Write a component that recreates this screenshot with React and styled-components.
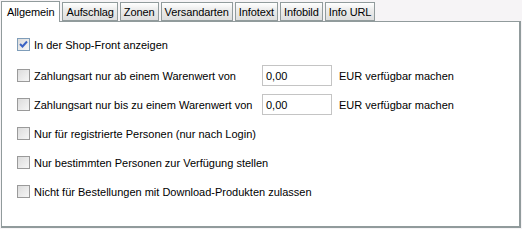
import React from "react";
import styled, { createGlobalStyle } from "styled-components";

const Global = createGlobalStyle`
  html, body { margin: 0; padding: 0; background: #ffffff; }
  body { font-family: Tahoma, "Liberation Sans", Arial, sans-serif; font-size: 11px; color: #000; }
`;

const Frame = styled.div`
  width: 522px;
  height: 229px;
  display: flex;
  flex-direction: column;
  background: #f6f4f6;
`;

const TabBar = styled.div`
  display: flex;
  align-items: flex-end;
  height: 21px;
  padding-left: 1px;
  gap: 2px;
`;

const Tab = styled.div`
  box-sizing: border-box;
  height: ${(p) => (p.$active ? "21px" : "19px")};
  padding: 0 ${(p) => (p.$active ? "5px" : "3px")};
  display: flex;
  align-items: center;
  border: 1px solid #919b9c;
  border-bottom: ${(p) => (p.$active ? "none" : "1px solid #919b9c")};
  background: ${(p) => (p.$active ? "#ffffff" : "linear-gradient(#ffffff, #ececec 40%, #dedede)")};
  margin-bottom: ${(p) => (p.$active ? "-1px" : "0")};
  position: relative;
  z-index: ${(p) => (p.$active ? 1 : 0)};
  white-space: nowrap;
  font-size: 11px;
  letter-spacing: -0.1px;
`;

const Panel = styled.div`
  box-sizing: border-box;
  flex: 1;
  margin: 0 1px 1px 1px;
  background: #ffffff;
  border: 1px solid #919b9c;
  border-right-width: 2px;
  border-bottom-width: 2px;
  padding: 12px 0 0 15px;
  display: flex;
  flex-direction: column;
`;

const Row = styled.label`
  display: flex;
  align-items: center;
  height: 21px;
  margin-bottom: ${(p) => p.$gap}px;
  white-space: nowrap;
`;

const Box = styled.span`
  box-sizing: border-box;
  width: 13px;
  height: 13px;
  border: 1px solid ${(p) => (p.$checked ? "#7f9db9" : "#9a9a9a")};
  background: linear-gradient(135deg, #dcdcdc, #f6f6f6);
  margin-right: 4px;
  display: inline-flex;
  align-items: center;
  justify-content: center;
`;

const Label = styled.span`
  width: ${(p) => (p.$w ? p.$w + "px" : "auto")};
`;

const Input = styled.div`
  box-sizing: border-box;
  width: 70px;
  height: 21px;
  border: 1px solid #c4c4c4;
  background: #fff;
  padding: 2px 3px;
  display: flex;
  align-items: center;
  margin-right: 7px;
`;

const Check = () => (
  <svg width="9" height="9" viewBox="0 0 9 9">
    <path d="M1 4 L3.5 6.5 L8 1.5" fill="none" stroke="#3a62c4" strokeWidth="2" />
  </svg>
);

const tabs = ["Allgemein", "Aufschlag", "Zonen", "Versandarten", "Infotext", "Infobild", "Info URL"];

export default function App() {
  return (
    <>
      <Global />
      <Frame>
        <TabBar>
          {tabs.map((t, i) => (
            <Tab key={t} $active={i === 0}>{t}</Tab>
          ))}
        </TabBar>
        <Panel>
          <Row $gap={10}>
            <Box $checked><Check /></Box>
            <Label>In der Shop-Front anzeigen</Label>
          </Row>
          <Row $gap={8}>
            <Box />
            <Label $w={228}>Zahlungsart nur ab einem Warenwert von</Label>
            <Input>0,00</Input>
            <Label>EUR verfügbar machen</Label>
          </Row>
          <Row $gap={8}>
            <Box />
            <Label $w={228}>Zahlungsart nur bis zu einem Warenwert von</Label>
            <Input>0,00</Input>
            <Label>EUR verfügbar machen</Label>
          </Row>
          <Row $gap={8}>
            <Box />
            <Label>Nur für registrierte Personen (nur nach Login)</Label>
          </Row>
          <Row $gap={8}>
            <Box />
            <Label>Nur bestimmten Personen zur Verfügung stellen</Label>
          </Row>
          <Row $gap={8}>
            <Box />
            <Label>Nicht für Bestellungen mit Download-Produkten zulassen</Label>
          </Row>
        </Panel>
      </Frame>
    </>
  );
}
